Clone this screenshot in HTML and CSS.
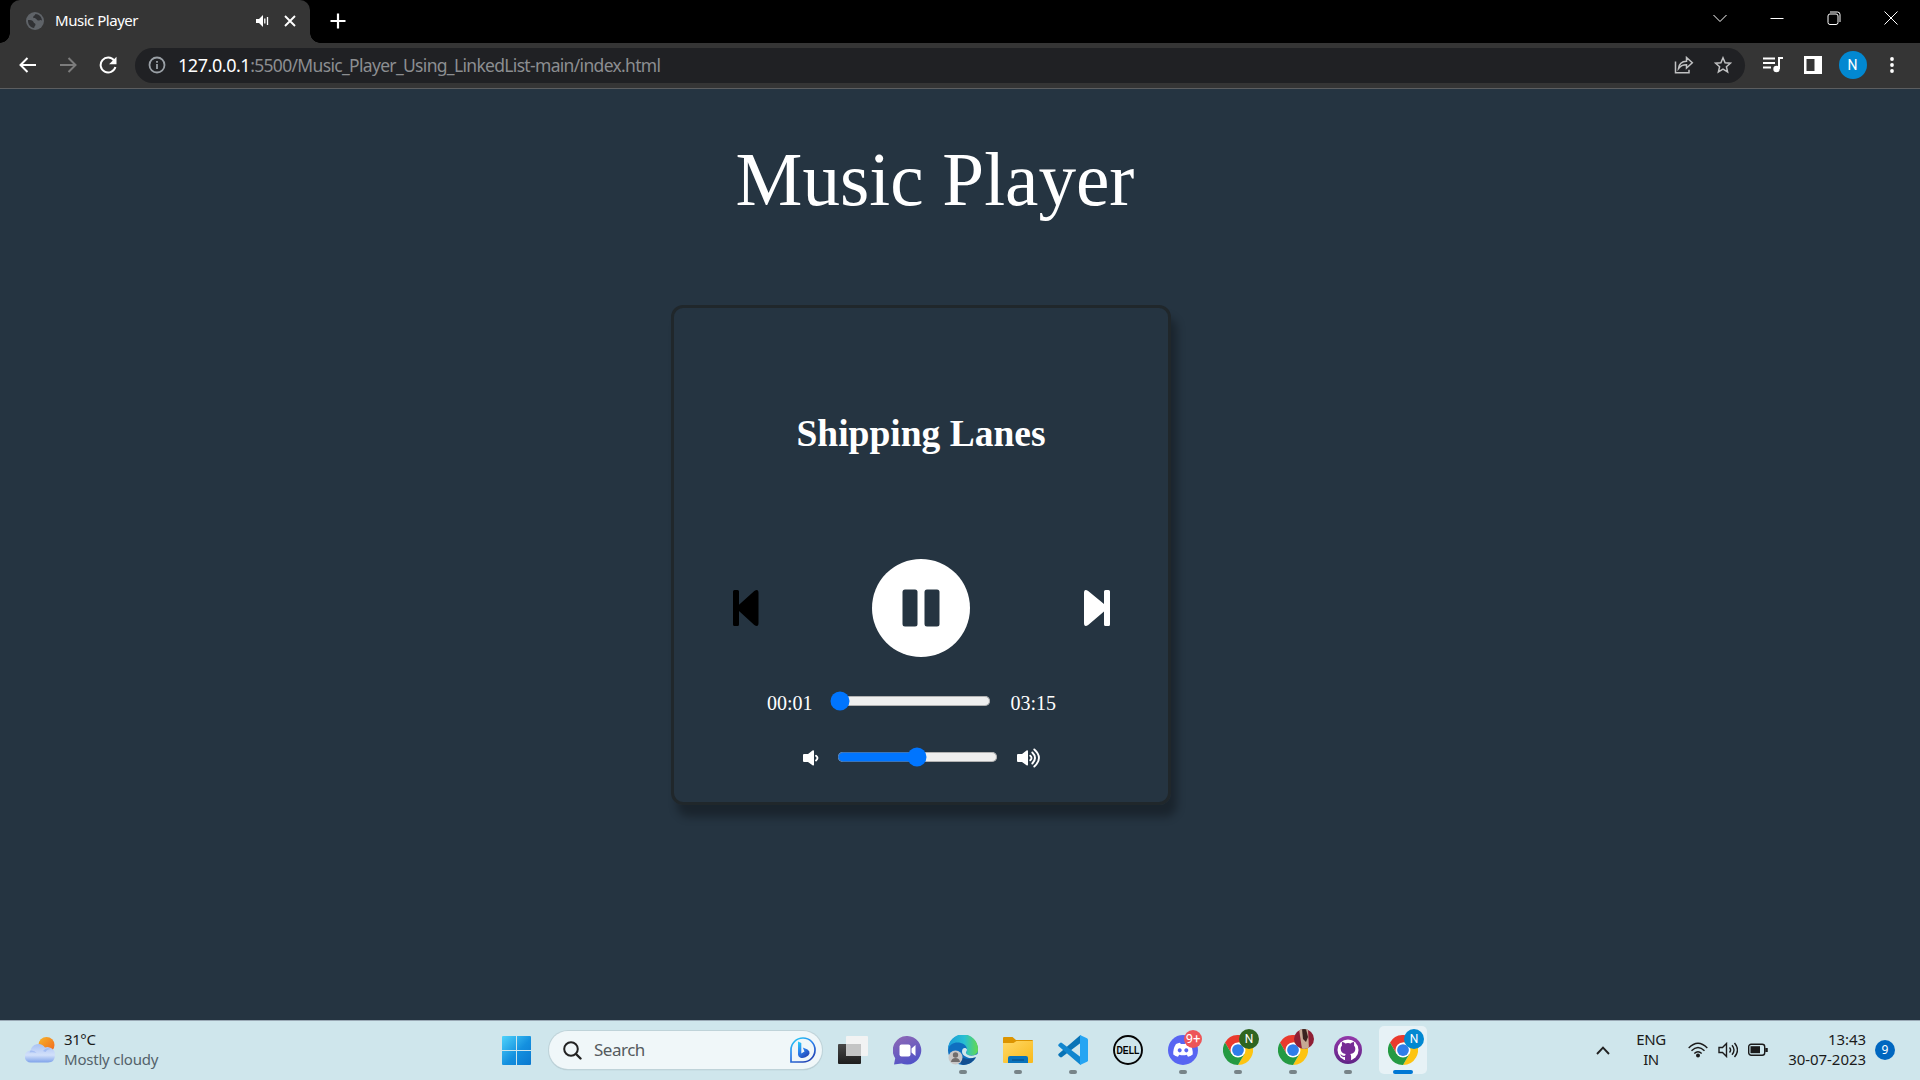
FILE: index.html
```html
<!DOCTYPE html>
<html lang="en">
<head>
<meta charset="utf-8">
<title>Music Player</title>
<link rel="stylesheet" href="styles.css">
</head>
<body>
<svg width="0" height="0" class="defs" aria-hidden="true">
  <symbol id="chrome" viewBox="0 0 48 48">
    <path fill="#ea3a2d" d="M3.2 12a24 24 0 0 1 41.6 0H24L13.6 30z"/>
    <path fill="#fdc412" d="M44.8 12A24 24 0 0 1 24 48l10.4-18L24 12z"/>
    <path fill="#249a42" d="M3.2 12A24 24 0 0 0 24 48l10.4-18H13.6z"/>
    <circle cx="24" cy="24" r="12" fill="#fff"/><circle cx="24" cy="24" r="9.4" fill="#2f7de9"/>
  </symbol>
</svg>

<header class="tabstrip">
  <div class="tab">
    <svg class="favicon" width="18" height="18" viewBox="0 0 18 18"><circle cx="9" cy="9" r="9" fill="#5f6368"/><path fill="#303134" d="M2 8c2.500 0 5 .3 5.500 2s2 1 2 2.500-1.500 2-1.300 3.500C4.500 15.600 1.700 12.500 2 8zM9.500 2c-.5 2-2.300 1.500-2.300 3.200 0 1.400 2.500.6 3.300 2 .6 1.200 2.200 1.600 3.300 1 .9-.4 1.800 0 2.200.6C16 5 13 2 9.500 2z"/></svg>
    <span class="tab-title">Music Player</span>
    <svg class="tab-audio" width="13" height="12" viewBox="0 0 13 12"><path fill="#fff" d="M0 4h3l4-4v12L3 8H0z"/><path stroke="#fff" stroke-width="1.300" d="M8.800 3.500v5M11.500 2v8"/></svg>
    <svg class="tab-close" width="12" height="12" viewBox="0 0 12 12"><path stroke="#fff" stroke-width="1.900" d="M1 1l10 10M11 1L1 11"/></svg>
  </div>
  <svg class="new-tab" width="16" height="16" viewBox="0 0 16 16"><path stroke="#fff" stroke-width="2.200" d="M8 .5v15M.5 8h15"/></svg>
  <div class="window-buttons">
    <svg width="14" height="14" viewBox="0 0 14 14"><path d="M.5 4l6.500 6.500L13.500 4"/></svg>
    <svg width="14" height="14" viewBox="0 0 14 14"><path d="M.5 7.500h13"/></svg>
    <svg width="14" height="14" viewBox="0 0 14 14"><rect x="1" y="3" width="10" height="10.500" rx="2"/><path d="M3 1h7.500q2.500 0 2.500 2.500V11"/></svg>
    <svg width="14" height="14" viewBox="0 0 14 14"><path d="M.5.5l13 13M13.500.5l-13 13"/></svg>
  </div>
</header>

<nav class="toolbar">
  <div class="nav-buttons">
    <svg width="18" height="16" viewBox="0 0 18 16"><path stroke="#fff" d="M17 8H2M8.500 1L1.500 8l7 7"/></svg>
    <svg width="18" height="16" viewBox="0 0 18 16"><path stroke="#7c7c7c" d="M1 8h15M9.500 1l7 7-7 7"/></svg>
    <svg width="18" height="18" viewBox="0 0 18 18"><path stroke="#fff" d="M15.200 4.600A7.500 7.500 0 1 0 16.400 11"/><path fill="#fff" d="M17.500.8v7.400h-7.400z"/></svg>
  </div>
  <div class="address">
    <svg class="info" width="18" height="18" viewBox="0 0 18 18"><circle cx="9" cy="9" r="7.500"/><path d="M9 8v5M9 5v1.800"/></svg>
    <span class="url"><span class="host">127.0.0.1</span><span class="path">:5500/Music_Player_Using_LinkedList-main/index.html</span></span>
    <svg class="share" width="20" height="18" viewBox="0 0 20 18"><path d="M1.500 5.500v11.300h13.500v-3M4.500 12.500C5 8 8 5.500 12.500 5.300V1.500l5.800 5.300-5.800 5.200V8.700c-3.500 0-6 1-8 3.800z"/></svg>
    <svg class="star" width="18" height="18" viewBox="0 0 18 18"><path d="M9 1.800l2.100 4.900 5.300.5-4 3.500 1.200 5.200L9 13.100l-4.600 2.800 1.200-5.200-4-3.500 5.300-.5z"/></svg>
  </div>
  <svg class="media" width="20" height="18" viewBox="0 0 20 18"><path stroke="#fff" stroke-width="2" d="M0 2.500h12M0 7h12M0 11.500h8"/><path stroke="#fff" stroke-width="2" d="M20 2h-4v11" fill="none"/><circle cx="13.500" cy="13" r="3.200" fill="#fff"/></svg>
  <svg class="panel" width="20" height="18" viewBox="0 0 20 18"><path fill="#fff" fill-rule="evenodd" d="M1 0h18v18H1zM3.500 3v12h8V3z"/></svg>
  <span class="avatar">N</span>
  <svg class="more" width="4" height="18" viewBox="0 0 4 18"><g fill="#fff"><circle cx="2" cy="3" r="1.900"/><circle cx="2" cy="9" r="1.900"/><circle cx="2" cy="15" r="1.900"/></g></svg>
</nav>

<main class="page">
  <h1 class="heading">Music Player</h1>
  <section class="player">
    <h2 class="song">Shipping Lanes</h2>
    <div class="controls">
      <svg width="26" height="36" viewBox="0 0 26 36"><path fill="#000" d="M1.500 0h3q1.500 0 1.500 1.500v13.300L21.300 1Q25.500-1.500 25.500 3v30q0 4.500-4.200 2L6 21v13.500Q6 36 4.500 36h-3Q0 36 0 34.500v-33Q0 0 1.500 0z"/></svg>
      <svg class="pause" width="98" height="98" viewBox="0 0 98 98"><circle cx="49" cy="49" r="49" fill="#fff"/><g fill="#253441"><rect x="30.500" y="30.500" width="15" height="37" rx="2.500"/><rect x="52.500" y="30.500" width="15" height="37" rx="2.500"/></g></svg>
      <svg width="26" height="36" viewBox="0 0 26 36"><path fill="#fff" d="M24.500 0h-3Q20 0 20 1.500v12.600L4.200 1Q0-1.500 0 3v30q0 4.500 4.200 2L20 21.500v13q0 1.500 1.500 1.500h3q1.500 0 1.500-1.500v-33Q26 0 24.500 0z"/></svg>
    </div>
    <div class="seek">
      <span class="time">00:01</span>
      <input class="slider" type="range" min="0" max="195" value="1">
      <span class="time">03:15</span>
    </div>
    <div class="volume">
      <svg width="16" height="16" viewBox="0 0 16 16"><path fill="#fff" d="M1 4h4l4.500-3.500Q11 0 11 1.200v13.600Q11 16 9.500 15.300L5 12H1Q0 12 0 11V5Q0 4 1 4z"/><path fill="none" stroke="#fff" stroke-width="1.900" stroke-linecap="round" d="M13 5.800q3 2.200 0 4.600"/></svg>
      <input class="slider" type="range" min="0" max="100" value="50">
      <svg width="24" height="20" viewBox="0 0 24 20"><path fill="#fff" d="M1 6h4l4.500-3.500Q11 2 11 3.200v13.600Q11 18 9.500 17.300L5 14H1Q0 14 0 13V7Q0 6 1 6z"/><path fill="none" stroke="#fff" stroke-width="1.900" stroke-linecap="round" d="M13.300 7.700q2.500 2.200 0 4.600M15.300 4.500q5.400 5.300 0 11M17.300 1.500q9.300 8.300 0 17"/></svg>
    </div>
  </section>
</main>

<footer class="taskbar">
  <div class="weather">
    <svg width="30" height="26" viewBox="0 0 30 26"><defs><linearGradient id="sun" x1="0" y1="0" x2="1" y2="1"><stop stop-color="#f7b52b"/><stop offset="1" stop-color="#f0641e"/></linearGradient><linearGradient id="cloud" x1="0" y1="0" x2="0" y2="1"><stop stop-color="#a9c2f3"/><stop offset=".6" stop-color="#d2e0fa"/><stop offset="1" stop-color="#7fa3ea"/></linearGradient></defs><circle cx="21.500" cy="8" r="8" fill="url(#sun)"/><path fill="url(#cloud)" d="M6 25.500a6 6 0 0 1-.5-12 8 8 0 0 1 14.500-3 7.500 7.500 0 0 1 10 7q0 8-7 8z"/><path fill="#8eaef0" opacity=".6" d="M5.500 13.500q4-.5 6 2.500-3-1-7-.5zM18 14q3-4 8-2-4 0-5.500 3z"/></svg>
    <div class="weather-text"><span>31°C</span><span class="muted">Mostly cloudy</span></div>
  </div>
  <svg class="start" width="29" height="29" viewBox="0 0 29 29"><defs><linearGradient id="win" x1="0" y1="0" x2="1" y2="1"><stop stop-color="#4fd3fb"/><stop offset=".55" stop-color="#1490df"/><stop offset="1" stop-color="#0a78cf"/></linearGradient></defs><path fill="url(#win)" d="M1 0h13v14H0V1q0-1 1-1zM15 0h13q1 0 1 1v13H15zM0 15h14v14H1q-1 0-1-1zM15 15h14v13q0 1-1 1H15z"/></svg>
  <div class="search">
    <svg width="19" height="19" viewBox="0 0 19 19"><circle cx="8" cy="8" r="6.800" fill="none" stroke="#222" stroke-width="2"/><path stroke="#222" stroke-width="2.400" stroke-linecap="round" d="M13 13l4.500 4.500"/></svg>
    <span>Search</span>
    <svg width="26" height="26" viewBox="0 0 26 26"><defs><linearGradient id="bing" x1="0" y1="0" x2=".6" y2="1"><stop stop-color="#25d5f5"/><stop offset=".5" stop-color="#2b83ee"/><stop offset="1" stop-color="#2448b8"/></linearGradient></defs><path fill="none" stroke="url(#bing)" stroke-width="1.700" d="M1 25V13A12 12 0 1 1 13 25z"/><path fill="url(#bing)" d="M8 4.500l3.300 1.500v10.500l3.200-2-1.700-4 4.700 2q2.500 1.300 2 4-.5 2-4 3.700-3 1.500-5.500.3-2-1-2-3z"/></svg>
  </div>
  <div class="apps">
    <span class="app"><svg width="30" height="28" viewBox="0 0 30 28"><defs><linearGradient id="tv1" x2="0" y2="1"><stop stop-color="#484848"/><stop offset="1" stop-color="#1d1d1d"/></linearGradient></defs><rect y="8" width="23" height="20" rx="1" fill="url(#tv1)"/><rect x="8" width="22" height="20" rx="1" fill="#f2f3f3"/><path fill="#c4c5c5" d="M8 8h15v12H8z"/></svg></span>
    <span class="app"><svg width="29" height="29" viewBox="0 0 29 29"><defs><linearGradient id="chat" x1=".2" x2=".6" y2="1"><stop stop-color="#8d68b5"/><stop offset="1" stop-color="#5052c8"/></linearGradient></defs><path fill="url(#chat)" d="M14.500 0a14.300 14.300 0 1 1-6 27.500L1 28.500l1.200-6.300A14.300 14.300 0 0 1 14.500 0z"/><rect x="6.500" y="8.500" width="11" height="12" rx="2" fill="#fff"/><path fill="#fff" d="M18.500 12.500l4-3.500v11l-4-3.500z"/></svg></span>
    <span class="app running"><svg width="30" height="30" viewBox="0 0 30 30"><defs><linearGradient id="edge1"><stop stop-color="#1a9bd9"/><stop offset=".55" stop-color="#28bfd2"/><stop offset="1" stop-color="#63da4d"/></linearGradient></defs><circle cx="15" cy="15" r="15" fill="#0f6fc0"/><path fill="url(#edge1)" d="M0 14A15 15 0 0 1 30 14.500c0 4-3 6-6.500 6-3 0-5.500-1-5.500-2.500 0-1 1-1.200 1-3.300C19 10 14 7.500 9.500 7.500 5 7.500 1.500 10 0 14z"/><path fill="#cfe6ec" d="M19 14.500c0 2-1.500 2.500-1 3.800 1 2.300 6 3 9 1.700l3-1v3.500l-3 .3c-3 1-6 .5-8.500-.8-3.500-1.500-4.500-3.500-4.500-5.500 0-4 4-4.500 5-2z"/><path fill="#124f91" d="M12 18c1 5 6 6.500 10.500 5.500 2-.3 4-1 5.500-1.500Q24 29.500 15.500 30C11 29 9 23 12 18z"/><circle cx="7.500" cy="22.500" r="7" fill="#c8c7c7"/><circle cx="7.500" cy="20" r="2.700" fill="#716d6c"/><path fill="#716d6c" d="M3 27q.5-4 4.500-4t4.500 4z"/></svg></span>
    <span class="app running"><svg width="30" height="27" viewBox="0 0 30 27"><defs><linearGradient id="folder" x2="1" y2="1"><stop stop-color="#ffd866"/><stop offset="1" stop-color="#f9b91a"/></linearGradient></defs><path fill="#dc9400" d="M1 0h8.500l3.500 3h16q1 0 1 1v4H0V1q0-1 1-1z"/><path fill="url(#folder)" d="M0 6h10.500l3-2H30v21q0 1-1 1H1q-1 0-1-1z"/><path fill="#0873bd" d="M5 26v-5q0-2 2-2h16q2 0 2 2v5z"/><path stroke="#084f88" stroke-width="1.200" d="M9 23h12"/></svg></span>
    <span class="app running"><svg width="30" height="30" viewBox="0 0 30 30"><path fill="#0873b6" d="M22.500 0L.7 18.800q-1 1 0 2L2 22q1 .8 2 0L22.500 8z"/><path fill="#1186cf" d="M22.500 30L.7 11.200q-1-1 0-2L2 8q1-.8 2 0l18.500 14z"/><path fill="#26a5f3" d="M22 0l7 3.200q1 .5 1 1.500v20.600q0 1-1 1.500L22 30z"/></svg></span>
    <span class="app"><svg width="30" height="30" viewBox="0 0 30 30"><circle cx="15" cy="15" r="14" fill="none" stroke="#050505" stroke-width="1.900"/><text class="dell" x="3.500" y="18.500" textLength="23" lengthAdjust="spacingAndGlyphs">DELL</text></svg></span>
    <span class="app running"><svg width="30" height="30" viewBox="0 0 30 30"><circle cx="15" cy="15" r="15" fill="#5865f2"/><path fill="#fff" fill-rule="evenodd" d="M8 9q2-1 4-1.300l.8 1.300h4.400l.8-1.300Q20 8 22 9q3.200 5 2.700 10.500-2.200 1.700-4.700 2.300l-1.200-2q-3.800 1-7.600 0l-1.200 2q-2.500-.6-4.700-2.300Q4.800 14 8 9zM11.700 13.200a2 2.100 0 1 0 .01 0zM18.300 13.200a2 2.100 0 1 0 .01 0z"/></svg><b class="badge red">9+</b></span>
    <span class="app running"><svg width="30" height="30"><use href="#chrome"/></svg><b class="badge green">N</b></span>
    <span class="app running"><svg width="30" height="30"><use href="#chrome"/></svg><b class="badge photo"><svg width="20" height="20" viewBox="0 0 20 20"><path fill="#8f1f35" d="M0 0h20v20H0z"/><path fill="#c6a994" d="M5 0h9l1 20H8z"/><path fill="#38231f" d="M8 0h4l2 8-2 5-3-3z"/></svg></b></span>
    <span class="app running"><svg width="28" height="28" viewBox="0 0 28 28"><defs><linearGradient id="gh" x2="0" y2="1"><stop stop-color="#9338a9"/><stop offset="1" stop-color="#5f2485"/></linearGradient></defs><circle cx="14" cy="14" r="14" fill="url(#gh)"/><circle cx="14" cy="14" r="10.500" fill="#fff"/><path fill="#772b95" d="M11 25v-4c-3 .8-3.500-1.500-5-2.500 2-.5 2.500 2 5 1.200l.7-1.700c-3-.3-5-1.800-5-5.200 0-1.500.5-2.500 1.300-3.400-.3-1-.2-2.300.2-3.300 1 0 2.200.7 3 1.300q2.800-.8 5.600 0c.8-.6 2-1.300 3-1.300.4 1 .5 2.300.2 3.300.8.9 1.300 1.900 1.300 3.400 0 3.400-2 4.900-5 5.200.6.700.8 1.500.8 2.500V25z"/></svg></span>
    <span class="app running active"><svg width="30" height="30"><use href="#chrome"/></svg><b class="badge blue">N</b></span>
  </div>
  <svg class="tray-chevron" width="14" height="9" viewBox="0 0 14 9"><path fill="none" stroke="#222" stroke-width="1.900" d="M1 8l6-6.300L13 8"/></svg>
  <div class="lang"><span>ENG</span><span>IN</span></div>
  <div class="tray">
    <svg width="20" height="16" viewBox="0 0 20 16"><path d="M.7 6q9.300-9.500 18.600 0M3.500 8.800q6.500-6.600 13 0M6.300 11.500q3.700-3.500 7.400 0"/><circle cx="10" cy="13.500" r="2" fill="#1b1b1b" stroke="none"/></svg>
    <svg width="20" height="16" viewBox="0 0 20 16"><path d="M1 5.500h3.500l4-4v13l-4-4H1zM11.500 5.500q2.200 2.500 0 5M14 3.300q4 4.700 0 9.400M16.500 1q6 7 0 14"/></svg>
    <svg width="20" height="14" viewBox="0 0 20 14"><rect x=".7" y="1.200" width="16" height="11" rx="2.500"/><rect class="charge" x="2.500" y="3.200" width="9.500" height="7"/><path class="terminal" d="M18.500 5v4"/></svg>
  </div>
  <div class="clock"><span>13:43</span><span>30-07-2023</span></div>
  <span class="count">9</span>
</footer>
</body>
</html>
```
FILE: styles.css
```css
* { box-sizing: border-box; }
body {
  margin: 0;
  width: 1920px;
  height: 1080px;
  overflow: hidden;
  display: flex;
  flex-direction: column;
  background: #253441;
  font-family: "Noto Sans", "Open Sans", sans-serif;
}
.defs { position: absolute; }
svg { display: block; flex: none; }

/* browser chrome */
.tabstrip {
  height: 43px;
  display: flex;
  align-items: flex-start;
  padding-left: 10px;
  background: #000;
}
.tab {
  position: relative;
  width: 300px;
  height: 43px;
  display: flex;
  align-items: center;
  padding: 0 14px 1px 16px;
  border-radius: 10px 10px 0 0;
  background: #353535;
  color: #fff;
}
.tab::before, .tab::after {
  content: "";
  position: absolute;
  bottom: 0;
  width: 10px;
  height: 10px;
}
.tab::before { left: -10px; background: radial-gradient(circle at 0 0, #000 9.500px, #353535 10px); }
.tab::after { right: -10px; background: radial-gradient(circle at 100% 0, #000 9.500px, #353535 10px); }
.tab-title { margin: 0 0 2px 11px; font-size: 15px; letter-spacing: -.47px; white-space: nowrap; }
.tab-audio { margin-left: auto; }
.tab-close { margin-left: 15px; }
.new-tab { margin: 13px 0 0 19.500px; }
.window-buttons { display: flex; gap: 43px; margin: 11px 22px 0 auto; }
.window-buttons path, .window-buttons rect { fill: none; stroke: #fff; stroke-width: 1; }

.toolbar {
  height: 46px;
  display: flex;
  align-items: center;
  padding: 0 0 1px 18.500px;
  border-bottom: 1px solid #5c5e60;
  background: #353535;
}
.nav-buttons { display: flex; align-items: center; gap: 22px; }
.nav-buttons path[stroke] { fill: none; stroke-width: 2; }
.address {
  width: 1610px;
  height: 35px;
  display: flex;
  align-items: center;
  margin-left: 18.500px;
  padding: 0 13.500px 0 13px;
  border-radius: 18px;
  background: #202124;
}
.info path, .info circle { fill: none; stroke: #9aa0a6; stroke-width: 1.800; }
.url { margin-left: 12px; font-size: 18px; letter-spacing: -.45px; color: #8c8e91; white-space: nowrap; }
.host { color: #fff; }
.path { font-size: 17.500px; letter-spacing: -.68px; }
.share { margin-left: auto; }
.share path, .star path { fill: none; stroke: #c0c1c2; stroke-width: 1.500; }
.star { margin-left: 20px; }
.media { margin-left: 17.500px; }
.panel { margin-left: 20px; }
.avatar {
  width: 28px;
  height: 28px;
  margin-left: 16px;
  border-radius: 50%;
  background: #0288d1;
  color: #fff;
  font: 14px/28px Roboto, sans-serif;
  text-align: center;
}
.more { margin-left: 23.500px; }

/* player page */
.page {
  height: 931px;
  display: flex;
  flex-direction: column;
  align-items: center;
  padding-right: 78px;
  color: #fff;
  font-family: "Liberation Serif", "Times New Roman", serif;
}
.heading { margin: 48px 0 0 28px; font-size: 75.200px; line-height: 86px; font-weight: 400; }
.player {
  width: 500px;
  height: 500px;
  margin-top: 82px;
  border: 3px solid #20272b;
  border-radius: 12px;
  box-shadow: 6px 12px 8px rgba(0, 0, 0, .3);
}
.song { margin: 104px 0 0; font-size: 37.500px; line-height: 44px; text-align: center; }
.controls { display: flex; justify-content: space-between; align-items: center; height: 98px; margin: 103px 58px 0 59px; }
.pause { margin: 0 1px 1px 0; }
.seek { display: flex; align-items: center; margin: 34px 0 0 93px; font-size: 20px; line-height: 23px; }
.slider { zoom: 1.25; width: 129px; height: 16px; margin: 0; }
.seek .slider { margin: 0 15.600px 4.600px 13.700px; }
.volume { display: flex; align-items: center; margin: 30px 0 0 129px; }
.volume .slider { margin: 0 15.600px 2px 14px; }

/* taskbar */
.taskbar {
  height: 60px;
  display: flex;
  align-items: center;
  padding-bottom: 1px;
  border-top: 1px solid #9aa9b5;
  background: #cfe6ec;
  color: #1b1b1b;
  font-size: 15px;
  line-height: 20px;
}
.weather { width: 502px; display: flex; align-items: center; gap: 9px; padding-left: 25px; }
.weather-text, .lang, .clock { display: flex; flex-direction: column; padding-bottom: 3px; letter-spacing: -.4px; white-space: nowrap; }
.muted { color: #54626a; letter-spacing: -.22px; }
.search {
  width: 273px;
  height: 38px;
  display: flex;
  align-items: center;
  margin-left: 18px;
  padding: 0 6px 0 14px;
  border-radius: 19px;
  background: #f0f7f9;
  box-shadow: 0 0 0 1px #bfd3d9, 0 1px 1px #8fa3ab;
  font-size: 17px;
  color: #555b5e;
}
.search span { flex: 1; margin-left: 12px; letter-spacing: -.5px; }
.apps { display: grid; grid-template-columns: repeat(11, 55px); margin-left: 3px; height: 48px; }
.app { position: relative; display: flex; align-items: center; justify-content: center; }
.active::before {
  content: "";
  position: absolute;
  inset: 0 3px 0 4px;
  border-radius: 5px;
  background: #e7f2f6;
}
.active svg { position: relative; }
.running::after {
  content: "";
  position: absolute;
  left: 23.500px;
  bottom: 0;
  width: 8px;
  height: 4px;
  border-radius: 2px;
  background: #778488;
}
.active::after { left: 17.500px; width: 20px; background: #0078d4; }
.badge {
  position: absolute;
  left: 29px;
  top: 3px;
  width: 20px;
  height: 20px;
  border-radius: 50%;
  overflow: hidden;
  color: #fff;
  font: 12px/20px Roboto, sans-serif;
  text-align: center;
}
.red { top: 4px; width: 18px; height: 18px; background: #ed5558; font-size: 13px; line-height: 18px; }
.green { background: #2f6520; }
.blue { background: #0288d1; }
.dell { font: bold 10px "Liberation Sans", sans-serif; }
.tray-chevron { margin-left: 166px; }
.lang { width: 50px; margin-left: 16px; text-align: center; }
.tray { display: flex; align-items: center; gap: 10px; margin-left: 12px; }
.tray path, .tray rect { fill: none; stroke: #1b1b1b; stroke-width: 1.400; }
.tray .charge { fill: #1b1b1b; stroke: none; }
.tray .terminal { stroke-width: 2.500; }
.clock { width: 90px; margin-left: 8px; text-align: right; letter-spacing: -.05px; }
.count {
  width: 20px;
  height: 20px;
  margin-left: 9px;
  border-radius: 50%;
  background: #0067c0;
  color: #fff;
  font-size: 12px;
  text-align: center;
}
```
